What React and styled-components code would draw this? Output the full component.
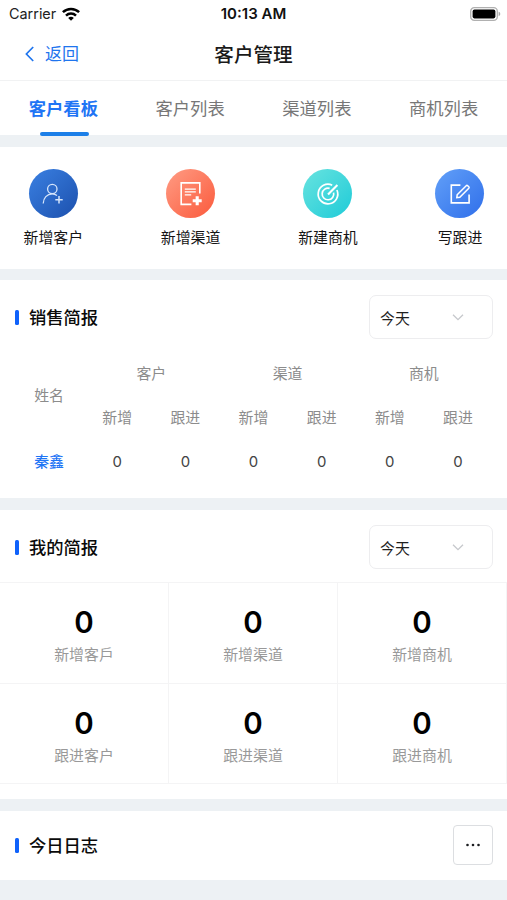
import styled, { createGlobalStyle } from "styled-components"

const tabs = ["客户看板", "客户列表", "渠道列表", "商机列表"]

const actions = [
  { label: "新增客户", from: "#3a80e2", to: "#1c50ad", Icon: AddUserIcon },
  { label: "新增渠道", from: "#ff9c84", to: "#fb5a3c", Icon: AddDocIcon },
  { label: "新建商机", from: "#68e3df", to: "#1fcbd8", Icon: TargetIcon },
  { label: "写跟进", from: "#62a0f8", to: "#2f6fea", Icon: EditIcon },
]

const groups = ["客户", "渠道", "商机"]

const salesRows = [{ name: "秦鑫", values: [0, 0, 0, 0, 0, 0] }]

const stats = [
  { label: "新增客戶", value: 0 },
  { label: "新增渠道", value: 0 },
  { label: "新增商机", value: 0 },
  { label: "跟进客户", value: 0 },
  { label: "跟进渠道", value: 0 },
  { label: "跟进商机", value: 0 },
]

export default function App() {
  return (
    <Page>
      <GlobalStyle />
      <StatusBar>
        <Carrier>Carrier <WifiIcon /></Carrier>
        <Clock>10:13 AM</Clock>
        <BatteryIcon />
      </StatusBar>
      <NavBar>
        <BackButton><BackIcon />返回</BackButton>
        <NavTitle>客户管理</NavTitle>
      </NavBar>
      <Tabs>
        {tabs.map((tab, i) => <Tab key={tab} $active={i === 0}>{tab}</Tab>)}
      </Tabs>

      <Actions>
        {actions.map(({ label, from, to, Icon }) => (
          <Action key={label}>
            <ActionCircle $from={from} $to={to}><Icon /></ActionCircle>
            {label}
          </Action>
        ))}
      </Actions>

      <Section $height="218px">
        <SectionHeader>
          <SectionTitle>销售简报</SectionTitle>
          <PeriodSelect />
        </SectionHeader>
        <SalesTable>
          <NameHead>姓名</NameHead>
          {groups.map(group => <GroupHead key={group}>{group}</GroupHead>)}
          {groups.map(group => [
            <HeadCell key={group + "new"}>新增</HeadCell>,
            <HeadCell key={group + "follow"}>跟进</HeadCell>,
          ])}
          {salesRows.map(row => [
            <NameCell key={row.name}>{row.name}</NameCell>,
            ...row.values.map((value, i) => <ValueCell key={i}>{value}</ValueCell>),
          ])}
        </SalesTable>
      </Section>

      <Section $height="289px">
        <SectionHeader>
          <SectionTitle>我的简报</SectionTitle>
          <PeriodSelect />
        </SectionHeader>
        <Stats>
          {stats.map(stat => (
            <Stat key={stat.label}>
              <StatValue>{stat.value}</StatValue>
              <StatLabel>{stat.label}</StatLabel>
            </Stat>
          ))}
        </Stats>
      </Section>

      <Section $height="69px">
        <SectionHeader>
          <SectionTitle>今日日志</SectionTitle>
          <MoreButton><DotsIcon /></MoreButton>
        </SectionHeader>
      </Section>
    </Page>
  )
}

function PeriodSelect() {
  return (
    <Select>
      今天
      <svg width="12" height="8" viewBox="0 0 12 8" fill="none" stroke="#c6c8cc" strokeWidth="1.3">
        <path d="M1 1.7 6 6.7 11 1.7" />
      </svg>
    </Select>
  )
}

function WifiIcon() {
  return (
    <svg width="18" height="14" viewBox="0 0 18 14" fill="none" stroke="#000" strokeWidth="2.5">
      <path d="M.9 5.2a11.6 11.6 0 0 1 16.2 0" />
      <path d="M4 8.6a7.2 7.2 0 0 1 10 0" />
      <path d="M9 13.8 6.2 11a3.9 3.9 0 0 1 5.6 0z" fill="#000" stroke="none" />
    </svg>
  )
}

function BatteryIcon() {
  return (
    <svg width="31" height="14" viewBox="0 0 31 14">
      <rect x=".7" y=".7" width="26.6" height="12.6" rx="3.6" fill="#fff" stroke="#b0b0b0" strokeWidth="1.3" />
      <rect x="2.6" y="2.6" width="22.8" height="8.8" rx="1.8" />
      <path d="M28.6 4.8c2.2.6 2.2 3.8 0 4.4z" fill="#a9a9a9" />
    </svg>
  )
}

function BackIcon() {
  return (
    <svg width="9" height="16" viewBox="0 0 9 16" fill="none" stroke="#1f75ee" strokeWidth="1.7">
      <path d="M8.2 1 1.4 8l6.8 7" />
    </svg>
  )
}

function AddUserIcon() {
  return (
    <svg width="24" height="24" viewBox="0 0 24 24" fill="none" stroke="#d5e5fb" strokeWidth="1.3">
      <circle cx="11.3" cy="7" r="4.7" />
      <path d="M2.2 21.4c.2-5.4 3.7-9.5 9.1-9.5 1.9 0 3.4.6 4.7 1.7" />
      <path d="M18 14v7.4M14.3 17.7h7.4" strokeWidth="1.5" />
    </svg>
  )
}

function AddDocIcon() {
  return (
    <svg width="24" height="26" viewBox="0 0 24 26" fill="none" stroke="#fff" strokeWidth="1.6">
      <path d="M20.8 12.5V1.9H2.2v21.5h10.2" />
      <path d="M5.8 8.2h11M5.8 10.9h11M5.8 13.8h6.4" strokeWidth="1.3" />
      <path d="M18.2 15.2v9M13.7 19.7h9" strokeWidth="3.1" />
    </svg>
  )
}

function TargetIcon() {
  return (
    <svg width="24" height="24" viewBox="0 0 24 24" fill="none" stroke="#fff" strokeWidth="1.7">
      <path d="M16.2 3.2A9.8 9.8 0 1 0 20.9 8" />
      <path d="M13.6 6.4A5.8 5.8 0 1 0 17.6 10.6" />
      <path d="M12 12.4 21.4 3" strokeWidth="2.1" />
    </svg>
  )
}

function EditIcon() {
  return (
    <svg width="24" height="24" viewBox="0 0 24 24" fill="none" stroke="#fff" strokeWidth="1.6">
      <path d="M12.4 3.1H3.3v17.8h17.8V12.6" />
      <path d="m9.2 12.7 9-9a1.1 1.1 0 0 1 1.5 0l1.1 1.1a1.1 1.1 0 0 1 0 1.5l-9 9-3 .4z" strokeWidth="1.5" />
    </svg>
  )
}

function DotsIcon() {
  return (
    <svg width="16" height="4" viewBox="0 0 16 4" fill="#1c1d20">
      <circle cx="2.5" cy="2" r="1.3" />
      <circle cx="8" cy="2" r="1.3" />
      <circle cx="13.5" cy="2" r="1.3" />
    </svg>
  )
}

const GlobalStyle = createGlobalStyle`
  * {
    box-sizing: border-box;
  }

  body {
    margin: 0;
    background: #edf1f4;
    font-family: Inter, "Noto Sans CJK SC", sans-serif;
  }

  svg {
    display: block;
    flex: none;
  }
`

const Page = styled.div`
  min-height: 900px;
  overflow: hidden;
`

const StatusBar = styled.div`
  display: grid;
  grid-template-columns: 1fr auto 1fr;
  align-items: center;
  height: 27px;
  padding: 0 6px 0 9px;
  background: #fff;

  > :last-child {
    justify-self: end;
  }
`

const Carrier = styled.div`
  display: flex;
  align-items: center;
  gap: 6px;
  font-size: 14.4px;
  color: #222;
`

const Clock = styled.div`
  margin-right: 3px;
  font-size: 15px;
  font-weight: 600;
  color: #111;
`

const NavBar = styled.div`
  display: grid;
  grid-template-columns: 1fr auto 1fr;
  align-items: center;
  height: 54px;
  padding: 0 25px;
  border-bottom: 1px solid #f1f2f3;
  background: #fff;
`

const BackButton = styled.button`
  display: flex;
  align-items: center;
  gap: 11px;
  padding: 0;
  border: 0;
  background: none;
  font: inherit;
  font-size: 17px;
  line-height: 24px;
  color: #1f75ee;
`

const NavTitle = styled.div`
  font-size: 19.6px;
  font-weight: 500;
  color: #1a1a1a;
`

const Tabs = styled.div`
  display: grid;
  grid-template-columns: repeat(4, 1fr);
  height: 54px;
  background: #fff;
`

const Tab = styled.div`
  position: relative;
  font-size: 17.3px;
  line-height: 55px;
  text-align: center;
  font-weight: ${props => props.$active ? "700" : "400"};
  color: ${props => props.$active ? "#1f75f5" : "#777"};

  &::after {
    content: "";
    display: ${props => props.$active ? "block" : "none"};
    position: absolute;
    left: 40px;
    bottom: 0;
    width: 49px;
    height: 4px;
    border-radius: 2px;
    background: #1c7fe8;
  }
`

const Actions = styled.div`
  display: flex;
  justify-content: space-between;
  height: 122px;
  margin-top: 12px;
  padding: 22px 22.5px 0 23.5px;
  background: #fff;
`

const Action = styled.div`
  display: flex;
  flex-direction: column;
  align-items: center;
  gap: 9px;
  font-size: 14.9px;
  line-height: 22px;
  color: #151515;
`

const ActionCircle = styled.div`
  display: flex;
  align-items: center;
  justify-content: center;
  width: 49px;
  height: 49px;
  border-radius: 50%;
  background: linear-gradient(135deg, ${props => props.$from}, ${props => props.$to});
`

const Section = styled.div`
  height: ${props => props.$height};
  margin-top: 12px;
  background: #fff;

  ${Actions} + & {
    margin-top: 11px;
  }
`

const SectionHeader = styled.div`
  display: flex;
  align-items: flex-start;
  justify-content: space-between;
  height: 59px;
  padding: 15px 14px 0 15px;
`

const SectionTitle = styled.div`
  display: flex;
  align-items: center;
  gap: 10px;
  height: 43px;
  font-size: 17.3px;
  font-weight: 500;
  color: #0a0a0a;

  &::before {
    content: "";
    width: 4px;
    height: 15px;
    margin-top: 2px;
    border-radius: 1.5px;
    background: #0f62fb;
  }

  ${Section}:last-child & {
    height: 37px;
  }
`

const Select = styled.div`
  display: flex;
  align-items: center;
  justify-content: space-between;
  width: 124px;
  height: 44px;
  padding: 0 28px 0 10px;
  border: 1px solid #ededef;
  border-radius: 7px;
  font-size: 14.9px;
  color: #1f1f1f;
`

const SalesTable = styled.div`
  display: grid;
  grid-template-columns: repeat(7, 1fr);
  grid-auto-rows: 44px;
  padding: 11px 15px 0;
  font-size: 14.9px;
`

const Cell = styled.div`
  display: flex;
  align-items: center;
  justify-content: center;
`

const ValueCell = styled(Cell)`
  padding-top: 3px;
  color: #444;
`

const HeadCell = styled(Cell)`
  color: #8c8c8c;
`

const NameHead = styled(HeadCell)`
  grid-row: span 2;
`

const GroupHead = styled(HeadCell)`
  grid-column: span 2;
`

const NameCell = styled(Cell)`
  color: #1f75f5;
  font-weight: 500;
`

const Stats = styled.div`
  display: grid;
  grid-template-columns: repeat(3, 1fr);
  grid-auto-rows: 100.5px;
  margin-top: 13px;
  border-top: 1px solid #f4f4f5;
`

const Stat = styled.div`
  display: flex;
  flex-direction: column;
  align-items: center;
  padding-top: 21px;
  border-right: 1px solid #f4f4f5;
  border-bottom: 1px solid #f4f4f5;
`

const StatValue = styled.div`
  font-size: 29.5px;
  line-height: 36px;
  font-weight: 600;
  color: #000;
`

const StatLabel = styled.div`
  margin-top: 4px;
  font-size: 14.9px;
  line-height: 22px;
  color: #999;
`

const MoreButton = styled.button`
  display: flex;
  align-items: center;
  justify-content: center;
  width: 40px;
  height: 40px;
  margin-top: -1px;
  padding: 0;
  border: 1px solid #dcdee1;
  border-radius: 4px;
  background: #fff;
`
